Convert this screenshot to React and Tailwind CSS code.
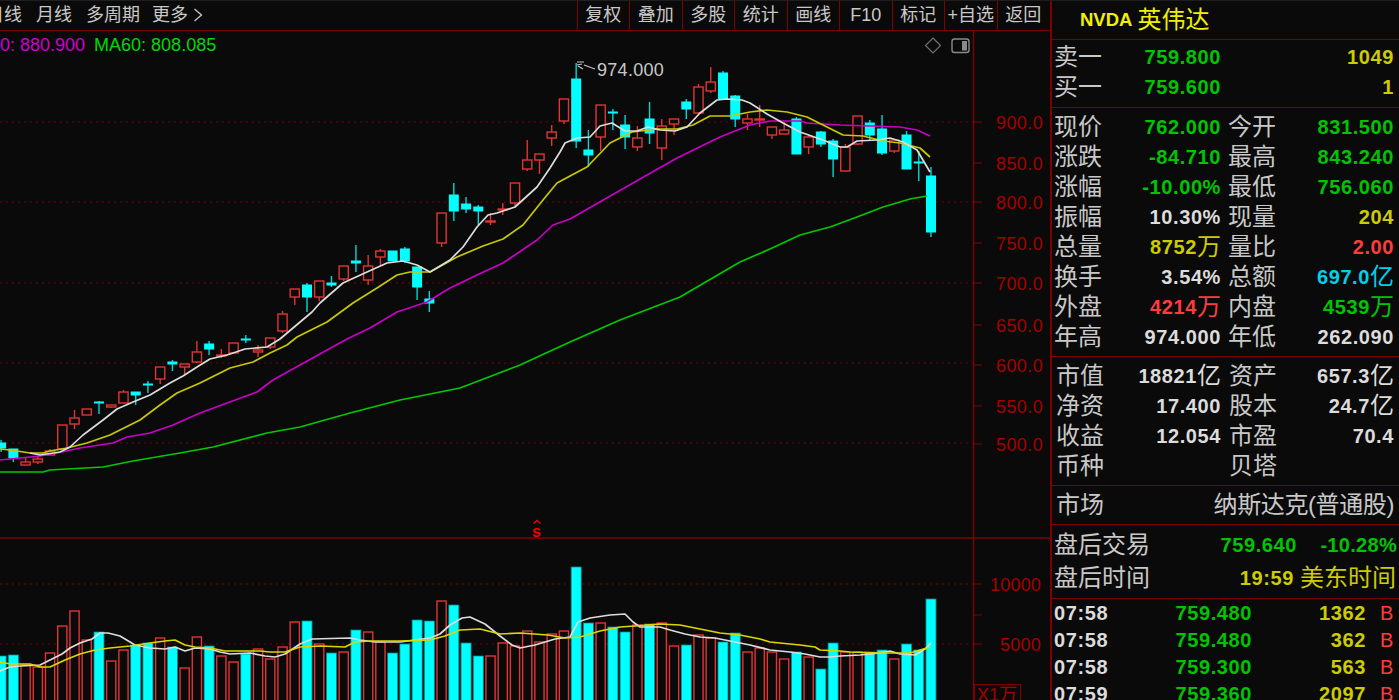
const RED = "#e23434";
const CYAN = "#00ffff";
const GRID = "#7a0000";
const AXIS = "#a80000";

const xAt = (i) => 62.3 + 12.235 * i;

// first candle is index -5, drawn partly off the left edge
const candles = [
  ["c", 443, 448, 440, 452], ["c", 449, 458, 449, 462], ["r", 462, 465, 458, 465], ["r", 459, 462, 457, 464],
  ["r", 451, 455, 449, 455], ["r", 425, 449, 425, 449], ["r", 418, 424, 410, 429], ["r", 409, 415, 409, 415],
  ["c", 402, 403, 401, 414], ["r", 405, 407, 405, 408], ["r", 392, 403, 390, 403], ["c", 392, 395, 392, 405],
  ["c", 384, 385, 381, 393], ["r", 367, 379, 367, 384], ["c", 362, 364, 360, 371], ["r", 364, 367, 364, 374],
  ["r", 352, 362, 341, 363], ["c", 344, 349, 341, 355], ["r", 355, 356, 349, 358], ["r", 343, 353, 343, 353],
  ["c", 339, 340, 335, 343], ["r", 350, 352, 345, 357], ["r", 338, 347, 338, 349], ["r", 314, 331, 311, 333],
  ["r", 289, 297, 289, 305], ["c", 285, 297, 283, 312], ["r", 281, 297, 281, 301], ["c", 283, 285, 276, 287],
  ["r", 266, 279, 266, 281], ["c", 261, 263, 245, 272], ["r", 266, 280, 255, 285], ["r", 251, 257, 249, 265],
  ["c", 251, 261, 251, 261], ["c", 249, 261, 247, 263], ["c", 267, 287, 267, 300], ["c", 299, 303, 291, 312],
  ["r", 213, 243, 213, 247], ["c", 195, 211, 183, 221], ["c", 204, 209, 197, 213], ["c", 207, 211, 205, 225],
  ["r", 221, 222, 213, 225], ["r", 209, 210, 203, 215], ["r", 183, 203, 183, 206], ["r", 160, 169, 140, 171],
  ["r", 154, 160, 154, 174], ["r", 132, 138, 125, 146], ["r", 99, 121, 99, 124], ["c", 79, 141, 63, 148],
  ["c", 150, 155, 130, 167], ["r", 105, 137, 105, 151], ["c", 112, 113, 109, 130], ["c", 125, 137, 115, 149],
  ["r", 138, 147, 126, 151], ["c", 119, 133, 102, 144], ["r", 126, 148, 119, 160], ["r", 119, 124, 119, 135],
  ["c", 102, 109, 99, 119], ["r", 87, 113, 84, 114], ["r", 82, 91, 67, 93], ["c", 73, 99, 71, 100],
  ["c", 96, 119, 95, 127], ["r", 119, 123, 114, 130], ["r", 119, 120, 105, 127], ["r", 127, 135, 127, 139],
  ["r", 130, 134, 122, 134], ["c", 119, 154, 117, 154], ["r", 137, 147, 135, 154], ["c", 132, 144, 131, 147],
  ["c", 141, 159, 139, 177], ["r", 147, 171, 144, 171], ["r", 116, 144, 116, 145], ["c", 123, 135, 120, 140],
  ["c", 129, 153, 115, 155], ["r", 140, 151, 145, 153], ["c", 135, 169, 131, 169], ["c", 162, 163, 151, 181],
  ["c", 176, 232, 167, 237],
];

const volumes = [
  ["c", 656], ["c", 655], ["r", 665], ["r", 667], ["r", 653], ["r", 626], ["r", 611], ["r", 640], ["c", 632],
  ["r", 661], ["r", 650], ["c", 645], ["c", 643], ["r", 638], ["c", 647], ["r", 668], ["r", 637], ["c", 646],
  ["r", 656], ["r", 662], ["c", 654], ["r", 649], ["r", 659], ["r", 647], ["r", 622], ["c", 621], ["r", 644],
  ["c", 653], ["r", 652], ["c", 630], ["r", 632], ["r", 642], ["c", 653], ["c", 644], ["c", 620], ["c", 621],
  ["r", 601], ["c", 605], ["c", 643], ["c", 656], ["r", 656], ["r", 643], ["r", 646], ["r", 631], ["r", 642],
  ["r", 634], ["r", 631], ["c", 567], ["c", 623], ["r", 623], ["c", 627], ["c", 632], ["r", 625], ["c", 624],
  ["r", 623], ["r", 646], ["c", 645], ["r", 635], ["r", 638], ["c", 642], ["c", 633], ["r", 652], ["r", 648],
  ["r", 652], ["r", 659], ["c", 652], ["r", 657], ["c", 669], ["c", 643], ["r", 652], ["r", 652], ["c", 652],
  ["c", 650], ["r", 659], ["c", 644], ["c", 650], ["c", 599],
];

const ma5 = "30,453 40,455 60,452 70,447 83,435 103,420 117,409 133,402 150,395 170,383 183,376 197,367 210,359 227,355 245,349 267,347 280,339 293,328 312,312 320,303 343,283 367,272 387,263 403,261 417,265 430,272 450,260 463,247 477,227 488,215 497,213 515,207 537,187 550,168 560,152 565,143 577,138 590,137 600,126 612,123 625,131 637,131 648,127 660,130 675,131 687,127 700,113 717,100 727,99 742,100 750,103 767,114 783,123 800,132 823,140 840,147 847,147 857,141 877,140 890,138 903,142 917,150 930,172";
const ma10 = "0,449 10,450 30,453 43,453 50,451 67,448 87,443 110,435 140,420 160,405 177,393 200,383 230,368 253,362 270,353 287,345 297,337 327,322 353,303 377,288 397,275 410,272 430,272 457,257 483,246 503,239 523,225 543,200 557,183 570,176 587,167 610,143 632,132 657,129 677,129 693,125 710,116 730,116 750,112 767,110 787,112 807,117 823,125 843,135 863,136 883,141 900,143 920,148 930,157";
const ma20 = "0,460 20,458 40,456 57,453 80,448 113,443 127,437 150,433 173,425 200,413 227,403 257,392 273,380 300,365 347,339 370,328 397,312 427,302 450,288 477,275 503,263 537,240 553,225 570,219 640,179 677,158 720,137 750,125 770,121 800,121 807,123 840,125 900,127 917,130 930,136";
const ma60 = "0,472 43,472 50,470 67,469 103,467 133,461 180,453 213,447 267,433 300,427 350,413 400,400 460,388 520,365 570,342 620,320 680,297 740,262 770,249 800,235 830,227 857,217 883,207 910,199 927,196";
const volMa5 = "0,671 10,667 20,666 40,665 50,660 62,654 70,648 80,643 92,639 100,633 108,633 120,636 135,645 150,648 165,649 175,647 185,651 195,648 210,649 220,652 230,654 250,653 265,656 275,657 285,654 300,644 312,639 350,638 360,640 375,642 400,642 415,640 430,638 440,634 450,625 462,618 470,617 485,624 500,636 512,645 520,648 535,645 555,639 570,637 578,622 590,618 610,615 625,614 633,622 640,627 660,627 670,630 685,634 700,637 715,638 730,641 750,645 770,650 790,652 805,654 820,657 830,657 840,656 860,655 880,653 890,651 900,654 915,655 925,649 931,643";
const volMa10 = "0,662 10,664 30,664 40,667 50,667 65,660 80,654 95,650 110,648 130,646 150,643 165,641 175,640 185,645 195,647 210,648 225,651 260,651 270,652 285,652 300,647 320,646 345,647 355,642 370,641 400,641 430,640 445,636 460,630 480,629 500,634 520,633 548,635 565,638 580,637 600,631 620,627 635,626 660,624 680,625 695,628 705,630 720,633 740,635 760,639 770,642 800,645 815,647 820,650 840,651 850,652 880,653 910,653 920,650 930,647";

const priceAxis = [
  ["900.0", 122], ["850.0", 163], ["800.0", 202], ["750.0", 243], ["700.0", 283],
  ["650.0", 325], ["600.0", 365], ["550.0", 406], ["500.0", 444],
];

const toolButtons = ["复权", "叠加", "多股", "统计", "画线", "F10", "标记", "+自选", "返回"];

const quoteRows = [
  ["现价", "762.000", "text-[#00c400]", "今开", "831.500", "text-[#00c400]"],
  ["涨跌", "-84.710", "text-[#00c400]", "最高", "843.240", "text-[#00c400]"],
  ["涨幅", "-10.00%", "text-[#00c400]", "最低", "756.060", "text-[#00c400]"],
  ["振幅", "10.30%", "text-[#dcdcdc]", "现量", "204", "text-[#cccc00]"],
  ["总量", "8752", "text-[#cccc00]", "量比", "2.00", "text-[#ff3c3c]", "万"],
  ["换手", "3.54%", "text-[#dcdcdc]", "总额", "697.0", "text-[#00d0e8]", null, "亿"],
  ["外盘", "4214", "text-[#ff3c3c]", "内盘", "4539", "text-[#00c400]", "万", "万"],
  ["年高", "974.000", "text-[#dcdcdc]", "年低", "262.090", "text-[#dcdcdc]"],
];

const fundRows = [
  ["市值", "18821", "text-[#dcdcdc]", "资产", "657.3", "text-[#dcdcdc]", "亿", "亿"],
  ["净资", "17.400", "text-[#dcdcdc]", "股本", "24.7", "text-[#dcdcdc]", null, "亿"],
  ["收益", "12.054", "text-[#dcdcdc]", "市盈", "70.4", "text-[#dcdcdc]"],
  ["币种", "", "text-[#dcdcdc]", "贝塔", "", "text-[#dcdcdc]"],
];

const trades = [
  ["07:58", "759.480", "1362"],
  ["07:58", "759.480", "362"],
  ["07:58", "759.300", "563"],
  ["07:59", "759.360", "2097"],
];

function Candle({ d, i }) {
  const [kind, top, bot, wt, wb] = d;
  const x = xAt(i - 5);
  const color = kind === "r" ? RED : "#00d8d8";
  return (
    <g>
      <line x1={x} x2={x} y1={wt} y2={wb} stroke={color} strokeWidth="1.4" />
      {kind === "r" ? (
        <rect x={x - 4.6} y={top} width={9.2} height={bot - top} fill="#0a0a0a" stroke={RED} strokeWidth="1.4" />
      ) : (
        <rect x={x - 5} y={top - 0.5} width={10} height={bot - top + 1} fill={CYAN} />
      )}
    </g>
  );
}

function VolumeBar({ d, i }) {
  const [kind, top] = d;
  const x = xAt(i - 5);
  if (kind === "r") {
    return <rect x={x - 4.6} y={top} width={9.2} height={720 - top} fill="#0a0a0a" stroke={RED} strokeWidth="1.4" />;
  }
  return <rect x={x - 5} y={top} width={10} height={720 - top} fill={CYAN} stroke="#008c8c" strokeWidth="0.8" />;
}

function Line({ points, color }) {
  return <polyline points={points} fill="none" stroke={color} strokeWidth="1.7" strokeLinejoin="round" />;
}

function ChartSvg() {
  return (
    <svg viewBox="0 31 1050 669" width="1050" height="669" className="block">
      {[122, 202, 283, 363, 443, 584, 644].map((y) => (
        <line key={y} x1="0" x2="973" y1={y} y2={y} stroke={GRID} strokeWidth="1" strokeDasharray="2 4" />
      ))}
      <line x1="0" x2="1050" y1="538" y2="538" stroke="#800000" strokeWidth="1.4" />
      <line x1="973.5" x2="973.5" y1="31" y2="700" stroke="#800000" strokeWidth="1.4" />

      {priceAxis.map(([label, y]) => (
        <g key={label}>
          <line x1="974" x2="982" y1={y} y2={y} stroke="#800000" />
          <text x="996" y={y + 6.5} fill={AXIS} fontSize="18" letterSpacing="0.4">{label}</text>
        </g>
      ))}
      <line x1="974" x2="982" y1="584" y2="584" stroke="#800000" />
      <line x1="974" x2="982" y1="615" y2="615" stroke="#800000" />
      <line x1="974" x2="982" y1="644" y2="644" stroke="#800000" />
      <text x="990" y="590.5" fill={AXIS} fontSize="18" letterSpacing="0.2">10000</text>
      <text x="1000" y="650.5" fill={AXIS} fontSize="18" letterSpacing="0.2">5000</text>
      <rect x="974.5" y="684.5" width="46" height="20" fill="none" stroke="#800000" />
      <text x="977" y="701" fill={AXIS} fontSize="18">X1万</text>

      {volumes.map((d, i) => <VolumeBar key={i} d={d} i={i} />)}
      <Line points={volMa5} color="#dcdcdc" />
      <Line points={volMa10} color="#d8d800" />

      {candles.map((d, i) => <Candle key={i} d={d} i={i} />)}
      <Line points={ma60} color="#00c800" />
      <Line points={ma20} color="#c800c8" />
      <Line points={ma10} color="#c8c800" />
      <Line points={ma5} color="#dcdcdc" />

      {/* highest price marker */}
      <path d="M577 62h7M577 65l5-1M578 66l5 3M584 65l11 4" fill="none" stroke="#c8c8c8" strokeWidth="1.1" />
      <text x="597" y="75.5" fill="#c8c8c8" fontSize="18" letterSpacing="0.3">974.000</text>

      {/* s marker above the volume panel */}
      <path d="M533.5 523.5l3.5-3 3.5 3" fill="none" stroke="#f00000" strokeWidth="1.4" />
      <text x="532" y="537" fill="#f00000" fontSize="16" fontWeight="700">s</text>

      {/* top right icons */}
      <path d="M933 38l7.5 7.5-7.5 7.5-7.5-7.5z" fill="none" stroke="#707070" strokeWidth="1.2" />
      <rect x="952" y="39" width="17" height="13.5" rx="2.5" fill="none" stroke="#8a8a8a" strokeWidth="1.4" />
      <rect x="962" y="41" width="5" height="9.5" fill="#8a8a8a" />
    </svg>
  );
}

function Value({ text, unit, color }) {
  return (
    <span className={`flex items-center justify-end whitespace-nowrap ${color}`}>
      <span className="text-[20px] font-bold tracking-[0.6px]">{text}</span>
      {unit && <span className="text-[24px] leading-none w-[24px]">{unit}</span>}
    </span>
  );
}

function QuoteRow({ row, inset }) {
  const [l1, v1, c1, l2, v2, c2, u1, u2] = row;
  return (
    <div className="grid grid-cols-[48px_119px_55px_118px] h-[30px] items-center text-[24px] leading-none text-[#c8c8c8] whitespace-nowrap">
      <span className={inset ? "ml-[2px]" : ""}>{l1}</span>
      <Value text={v1} unit={u1} color={c1} />
      <span className={inset ? "ml-[8px]" : "ml-[7px]"}>{l2}</span>
      <Value text={v2} unit={u2} color={c2} />
    </div>
  );
}

export default function App() {
  return (
    <div className="flex w-[1399px] h-[700px] overflow-hidden bg-[#0a0a0a] border-t border-[#1e1e1e] font-['Liberation_Sans','Noto_Sans_CJK_SC',sans-serif]">
      <div className="w-[1050px] shrink-0 flex flex-col">
        <div className="flex justify-between h-[30px] border-b border-[#800000] text-[18px] leading-none text-[#c8c8c8] box-content -mt-px overflow-hidden">
          <div className="flex items-center gap-[14px] -ml-[14px]">
            <span>日线</span>
            <span>月线</span>
            <span>多周期</span>
            <span className="flex items-center gap-[5px] -ml-[2px]">
              更多
              <svg width="10" height="14" viewBox="0 0 10 14" fill="none" stroke="#c8c8c8" strokeWidth="1.3"><path d="M1.5 1l7 6-7 6" /></svg>
            </span>
          </div>
          <div className="flex pr-[1px]">
            {toolButtons.map((b) => (
              <span key={b} className="w-[52.5px] flex items-center justify-center border-l border-[#800000] whitespace-nowrap">{b}</span>
            ))}
          </div>
        </div>
        <div className="relative">
          <ChartSvg />
          <div className="absolute left-0 top-[4px] flex gap-[9px] text-[18px] leading-[20px]">
            <span className="text-[#d000d0]">0: 880.900</span>
            <span className="text-[#00d800]">MA60: 808.085</span>
          </div>
        </div>
      </div>

      <div className="w-[349px] shrink-0 flex flex-col border-l-2 border-[#800000] -mt-px text-[#c8c8c8]">
        <div className="h-[40px] shrink-0 border-b border-[#800000] flex items-center pl-[28px] gap-[5px] text-[#f0f000]">
          <span className="text-[18.5px] font-bold">NVDA</span>
          <span className="text-[24px] leading-none">英伟达</span>
        </div>

        <div className="shrink-0 pt-[2px] pb-[5px] pl-[2px] border-b border-[#800000]">
          {[["卖一", "759.800", "1049"], ["买一", "759.600", "1"]].map(([l, p, q]) => (
            <div key={l} className="grid grid-cols-[48px_119px_1fr] w-[340px] h-[30px] items-center text-[24px] leading-none">
              <span>{l}</span>
              <Value text={p} color="text-[#00c400]" />
              <Value text={q} color="text-[#cccc00]" />
            </div>
          ))}
        </div>

        <div className="shrink-0 pt-[4px] pb-[4px] pl-[2px] border-b border-[#800000]">
          {quoteRows.map((r) => <QuoteRow key={r[0]} row={r} />)}
        </div>

        <div className="shrink-0 pt-[4px] pb-[4px] pl-[2px] border-b border-[#800000]">
          {fundRows.map((r) => <QuoteRow key={r[0]} row={r} inset />)}
        </div>

        <div className="shrink-0 h-[39px] pl-[4px] pr-[5px] flex items-center justify-between border-b border-[#800000] text-[24px] leading-none">
          <span>市场</span>
          <span className="tracking-[-0.4px]">纳斯达克(普通股)</span>
        </div>

        <div className="shrink-0 pt-[3px] pb-[4px] pl-[2px] border-b border-[#800000] text-[24px] leading-none">
          <div className="flex items-center h-[33px]">
            <span className="w-[96px]">盘后交易</span>
            <span className="w-[147px] text-right text-[20px] font-bold tracking-[0.6px] text-[#00c400]">759.640</span>
            <span className="w-[100px] text-right text-[20px] font-bold tracking-[0.3px] text-[#00c400]">-10.28%</span>
          </div>
          <div className="flex items-center h-[33px]">
            <span className="w-[96px]">盘后时间</span>
            <span className="w-[144px] text-right text-[20px] font-bold tracking-[0.6px] text-[#cccc00]">19:59</span>
            <span className="ml-[6px] text-[#cccc00]">美东时间</span>
          </div>
        </div>

        <div className="pl-[2px]">
          {trades.map(([t, p, q], i) => (
            <div key={i} className="flex items-center h-[27px] text-[20px] font-bold tracking-[0.6px] leading-none">
              <span className="w-[52px] text-[#dcdcdc] whitespace-nowrap">{t}</span>
              <span className="w-[146px] text-right text-[#00c400]">{p}</span>
              <span className="w-[114px] text-right text-[#cccc00]">{q}</span>
              <span className="ml-[14px] text-[#ff3c3c] font-normal">B</span>
            </div>
          ))}
        </div>
      </div>
    </div>
  );
}
